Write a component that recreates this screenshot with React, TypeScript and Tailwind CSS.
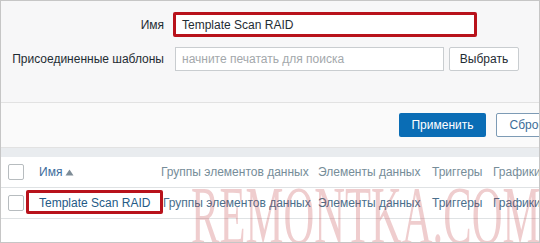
import React from "react"

const headers = ["Группы элементов данных", "Элементы данных", "Триггеры", "Графики"]

const Checkbox = () => (
  <span className="block w-4 h-4 rounded-[2px] border border-[#b7bcbf] bg-white" />
)

export default function App() {
  return (
    <div
      className="relative w-[540px] h-[243px] overflow-hidden bg-white border border-[#c6c6c6] text-[12px] text-[#1f2c33]"
      style={{ fontFamily: '"Liberation Sans", Arial, sans-serif' }}
    >
      {/* filter form */}
      <div className="h-[102px] bg-[#f7f7f8] border-b border-[#e2e2e2] pt-[11px]">
        <div className="grid grid-cols-[163px_auto] gap-x-[11px] gap-y-[10px] items-center">
          <label className="text-right">Имя</label>
          <div className="-ml-[2px] w-[304px] h-[25px] border-[3px] border-[#b8121b] rounded-[2px] bg-white flex items-center pl-[6px]">
            Template Scan RAID
          </div>
          <label className="text-right">Присоединенные шаблоны</label>
          <div className="flex gap-[5px]">
            <div className="w-[269px] h-[24px] border border-[#c9cdd0] bg-white flex items-center pl-[6px] text-[#a3a8ab]">
              начните печатать для поиска
            </div>
            <button className="w-[70px] h-[24px] border border-[#c9cdd0] rounded-[2px] bg-white text-[#1f2c33]">
              Выбрать
            </button>
          </div>
        </div>
      </div>

      {/* filter footer */}
      <div className="h-[45px] bg-[#fafafa] border-b border-[#e2e2e2] flex items-start pt-[10px] pl-[398px] gap-[10px]">
        <button className="shrink-0 w-[87px] h-[24px] rounded-[2px] bg-[#0a6db5] text-white">Применить</button>
        <button className="shrink-0 w-[62px] h-[24px] rounded-[2px] border border-[#7d9bb5] bg-white text-[#3c6d99]">Сброс</button>
      </div>

      <div className="h-[9px] bg-[#e9ecef]" />

      {/* table */}
      <div className="w-[600px]">
        <div className="grid grid-cols-[38px_122px_157px_114px_61px_108px] h-[31px] items-center border-b border-[#dfe2e4] text-[#768d99]">
          <div className="pl-[7px]"><Checkbox /></div>
          <div className="text-[#3b6c9c] flex items-center gap-[3px]">
            Имя
            <svg width="9" height="7" viewBox="0 0 9 7"><path d="M0.5 6.5 L4.5 0.5 L8.5 6.5 Z" fill="#7e8c96" /></svg>
          </div>
          {headers.map(h => <div key={h} className="whitespace-nowrap">{h}</div>)}
        </div>
        <div className="grid grid-cols-[38px_122px_157px_114px_61px_108px] h-[31px] items-center border-b border-[#dfe2e4] text-[#4a6f8c]">
          <div className="pl-[7px]"><Checkbox /></div>
          <div className="relative h-full flex items-center text-[#245a86] whitespace-nowrap">
            Template Scan RAID
            <span className="absolute -left-[13px] -right-[2px] top-[2px] bottom-[4px] border-[3px] border-[#b8121b] rounded-[2px]" />
          </div>
          {headers.map((h, i) => (
            <div key={h} className={`whitespace-nowrap ${i === 0 ? "pl-[2px]" : ""}`}>{h}</div>
          ))}
        </div>
      </div>

      {/* watermark */}
      <div
        className="absolute left-[190px] top-[174px] text-[82px] leading-none whitespace-nowrap origin-left scale-x-[0.52] text-[#c0393b]/25 pointer-events-none"
        style={{ fontFamily: '"Liberation Serif", "Times New Roman", serif' }}
      >
        REMONTKA.COM
      </div>
    </div>
  )
}
